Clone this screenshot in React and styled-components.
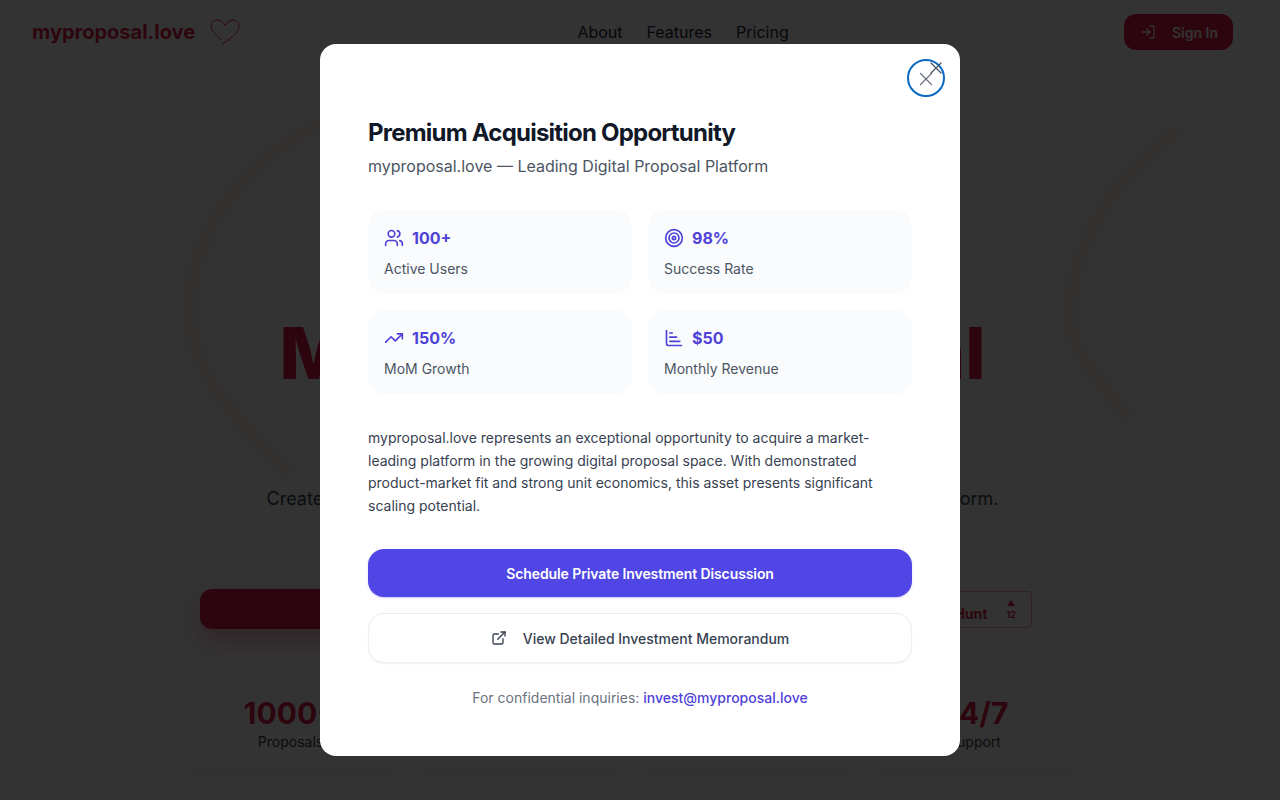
import React from 'react';
import styled, { createGlobalStyle } from 'styled-components';
import { Users, Target, TrendingUp, ChartBarIncreasing, LogIn, ExternalLink, X } from 'lucide-react';

const GlobalStyle = createGlobalStyle`
    html, body {
        margin: 0;
        height: 800px;
        overflow: hidden;
        background: #fff;
        font-family: Inter, "Liberation Sans", sans-serif;
    }
    * { box-sizing: border-box; }
`

const Page = styled.div`
    position: relative;
    width: 1265px;
    height: 800px;
    overflow: hidden;
`
const Header = styled.header`
    display: flex;
    align-items: center;
    justify-content: space-between;
    height: 64px;
    padding: 0 32px;
    box-shadow: 0 1px 3px rgba(0,0,0,.06);
`
const Brand = styled.div`
    display: flex;
    align-items: center;
    gap: 15px;
    padding-right: 2px;
    font-size: 20px;
    font-weight: 700;
    color: #e11d48;
`
const NavLinks = styled.nav`
    display: flex;
    gap: 24px;
    font-size: 16px;
    color: #1f2937;
`
const SignIn = styled.div`
    display: flex;
    align-items: center;
    gap: 16px;
    width: 109px;
    height: 36px;
    padding-left: 16px;
    border-radius: 12px;
    background: #e11d48;
    color: #fff;
    font-size: 14px;
    font-weight: 600;
`
const BigHeart = styled.svg`
    position: absolute;
    left: 40px;
    top: 70px;
    filter: blur(3px);
`
const Hero = styled.main`
    position: relative;
    display: flex;
    flex-direction: column;
    align-items: center;
`
const Headline = styled.h1`
    margin: 249px 0 0;
    font-size: 72px;
    line-height: 80px;
    font-weight: 800;
    color: #e11d48;
`
const Lead = styled.p`
    margin: 92px 0 0;
    font-size: 18px;
    line-height: 28px;
    color: #374151;
    white-space: nowrap;
`
const Actions = styled.div`
    display: flex;
    align-items: center;
    gap: 16px;
    width: 865px;
    padding-right: 33px;
    margin-top: 76px;
`
const CtaButton = styled.div`
    flex: 1;
    height: 40px;
    border-radius: 12px;
    background: #e11d48;
    box-shadow: 0 12px 24px rgba(225,29,72,.35);
`
const HuntBadge = styled.div`
    display: flex;
    align-items: center;
    justify-content: flex-end;
    gap: 19px;
    width: 250px;
    height: 37px;
    padding-right: 15px;
    border: 1px solid #f9a8b8;
    border-radius: 4px;
    color: #e11d48;
    font-size: 14px;
    font-weight: 700;
`
const HuntName = styled.span`
    padding-top: 8px;
`
const HuntVotes = styled.div`
    display: flex;
    flex-direction: column;
    align-items: center;
    padding-top: 2px;
    font-size: 9px;
    line-height: 10px;
`
const Arrow = styled.div`
    width: 0;
    height: 0;
    border-left: 4px solid transparent;
    border-right: 4px solid transparent;
    border-bottom: 6px solid #e11d48;
    margin-bottom: 4px;
`
const Stats = styled.div`
    display: grid;
    grid-template-columns: repeat(4, 212px);
    gap: 16px;
    margin-top: 53px;
`
const StatCard = styled.div`
    height: 86px;
    padding-top: 13px;
    text-align: center;
    border-radius: 12px;
    box-shadow: 0 4px 8px rgba(0,0,0,.06);
`
const StatNumber = styled.div`
    font-size: 30px;
    line-height: 37px;
    font-weight: 700;
    color: #e11d48;
`
const StatName = styled.div`
    font-size: 14px;
    line-height: 20px;
    color: #374151;
`

const Overlay = styled.div`
    position: fixed;
    inset: 0;
    display: flex;
    align-items: center;
    justify-content: center;
    background: rgba(0,0,0,.8);
`
const Modal = styled.section`
    position: relative;
    width: 640px;
    height: 711.5px;
    padding: 73px 48px 48px;
    border-radius: 16px;
    background: #fff;
`
const CloseRing = styled.div`
    position: absolute;
    top: 15px;
    right: 15px;
    display: flex;
    align-items: center;
    justify-content: center;
    width: 38px;
    height: 38px;
    padding-top: 1px;
    border: 2px solid #0a69c4;
    border-radius: 50%;
    color: #6b7280;
`
const CornerClose = styled.div`
    position: absolute;
    top: 14px;
    right: 14px;
    display: flex;
    color: #4b5563;
`
const Title = styled.h2`
    margin: 0;
    font-size: 24px;
    line-height: 32px;
    font-weight: 700;
    letter-spacing: -0.78px;
    color: #111827;
`
const Subtitle = styled.p`
    margin: 5px 0 0;
    font-size: 16px;
    line-height: 24px;
    color: #4b5563;
`
const MetricGrid = styled.div`
    display: grid;
    grid-template-columns: 1fr 1fr;
    gap: 16px;
    margin-top: 32px;
`
const Metric = styled.div`
    height: 84px;
    padding: 16px;
    border-radius: 16px;
    background: #f9fbfd;
`
const MetricTop = styled.div`
    display: flex;
    align-items: center;
    gap: 8px;
    height: 24px;
    color: #4f42d8;
    font-size: 16px;
    font-weight: 700;
`
const MetricLabel = styled.div`
    margin-top: 9px;
    font-size: 14px;
    line-height: 20px;
    color: #4b5563;
`
const Body = styled.p`
    margin: 32.5px 0 0;
    font-size: 14px;
    line-height: 22.75px;
    color: #374151;
`
const PrimaryButton = styled.button`
    display: block;
    width: 100%;
    height: 48px;
    margin-top: 31.5px;
    border: 0;
    border-radius: 16px;
    background: #4f46e5;
    color: #fff;
    font: 600 14px Inter, sans-serif;
    letter-spacing: -0.1px;
    box-shadow: 0 1px 2px rgba(79,70,229,.3);
`
const SecondaryButton = styled.button`
    display: flex;
    align-items: center;
    justify-content: center;
    gap: 16px;
    width: 100%;
    height: 50px;
    margin-top: 16px;
    border: 1px solid #eceef1;
    border-radius: 16px;
    background: #fff;
    color: #374151;
    font: 500 14px Inter, sans-serif;
    box-shadow: 0 1px 2px rgba(0,0,0,.06);
`
const Footnote = styled.p`
    margin: 24.5px 0 0;
    text-align: center;
    font-size: 14px;
    line-height: 20px;
    color: #6b7280;
`
const Mail = styled.a`
    color: #4f42d8;
    font-weight: 500;
    text-decoration: none;
`

const metrics = [
    { icon: Users, value: '100+', label: 'Active Users' },
    { icon: Target, value: '98%', label: 'Success Rate' },
    { icon: TrendingUp, value: '150%', label: 'MoM Growth' },
    { icon: ChartBarIncreasing, value: '$50', label: 'Monthly Revenue' },
]

const stats = [
    { number: '1000+', name: 'Proposals' },
    { number: '98%', name: 'Said Yes' },
    { number: '50+', name: 'Countries' },
    { number: '24/7', name: 'Support' },
]

const App = () => (
    <Page>
        <GlobalStyle />
        <Header>
            <Brand>
                myproposal.love
                <svg width="30" height="26" viewBox="0 0 30 26" fill="none" stroke="#e11d48" strokeWidth="1">
                    <path d="M12 25c2-1.500 6-3.500 10-7 4-3.500 7-7 7-11 0-3.500-2.500-6-6-6-3.500 0-6 2-8 5.500C13.500 3 10 1 7 1 3.500 1 1 3.500 1 7c0 4 4 8 10 14" />
                </svg>
            </Brand>
            <NavLinks>
                <span>About</span>
                <span>Features</span>
                <span>Pricing</span>
            </NavLinks>
            <SignIn>
                <LogIn size={16} />
                Sign In
            </SignIn>
        </Header>
        <BigHeart width="1200" height="500" viewBox="0 0 1200 500" fill="none" stroke="#fbd0b8" strokeOpacity=".22" strokeWidth="16">
            <path d="M340 40C230 50 150 150 150 240c0 70 60 120 100 165" />
            <path d="M1140 60c-60 40-110 110-110 190 0 30 30 60 60 100" />
        </BigHeart>
        <Hero>
            <Headline>Make Your Proposal</Headline>
            <Lead>Create wonderful marriage proposals with personalized stories on our digital platform.</Lead>
            <Actions>
                <CtaButton />
                <HuntBadge>
                    <HuntName>Product Hunt</HuntName>
                    <HuntVotes>
                        <Arrow />
                        12
                    </HuntVotes>
                </HuntBadge>
            </Actions>
            <Stats>
                {stats.map(s => (
                    <StatCard key={s.name}>
                        <StatNumber>{s.number}</StatNumber>
                        <StatName>{s.name}</StatName>
                    </StatCard>
                ))}
            </Stats>
        </Hero>
        <Overlay>
            <Modal>
                <CloseRing>
                    <X size={22} strokeWidth={1.35} />
                </CloseRing>
                <CornerClose>
                    <X size={20} strokeWidth={1.5} />
                </CornerClose>
                <Title>Premium Acquisition Opportunity</Title>
                <Subtitle>myproposal.love — Leading Digital Proposal Platform</Subtitle>
                <MetricGrid>
                    {metrics.map(({ icon: Icon, value, label }) => (
                        <Metric key={label}>
                            <MetricTop>
                                <Icon size={20} />
                                {value}
                            </MetricTop>
                            <MetricLabel>{label}</MetricLabel>
                        </Metric>
                    ))}
                </MetricGrid>
                <Body>
                    myproposal.love represents an exceptional opportunity to acquire a market-leading platform in the growing digital proposal space. With demonstrated product-market fit and strong unit economics, this asset presents significant scaling potential.
                </Body>
                <PrimaryButton>Schedule Private Investment Discussion</PrimaryButton>
                <SecondaryButton>
                    <ExternalLink size={16} />
                    View Detailed Investment Memorandum
                </SecondaryButton>
                <Footnote>
                    For confidential inquiries: <Mail>invest@myproposal.love</Mail>
                </Footnote>
            </Modal>
        </Overlay>
    </Page>
)

export default App;
